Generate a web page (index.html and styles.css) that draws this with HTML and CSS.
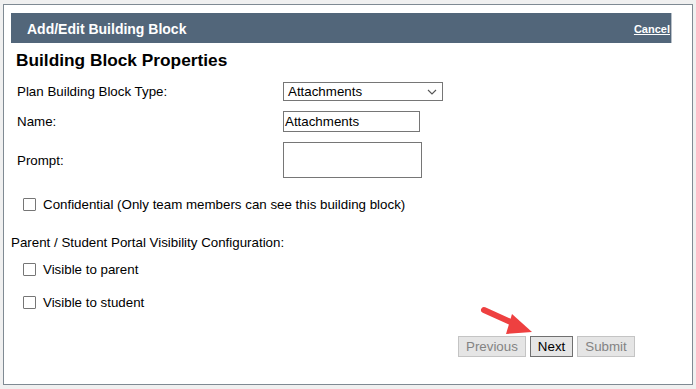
FILE: index.html
```html
<!DOCTYPE html>
<html>
<head>
<meta charset="utf-8">
<link rel="stylesheet" href="styles.css">
</head>
<body>
<div class="frame">
  <div class="header">
    <span class="title">Add/Edit Building Block</span>
    <a class="cancel" href="#">Cancel</a>
  </div>
  <div class="content">
    <h2 class="section">Building Block Properties</h2>
    <div class="form">
      <div class="row row-type">
        <label class="label">Plan Building Block Type:</label>
        <div class="select"><span>Attachments</span>
          <svg class="chev" width="10" height="6" viewBox="0 0 10 6"><path d="M1 1 L5 5 L9 1" fill="none" stroke="#555" stroke-width="1.1"/></svg>
        </div>
      </div>
      <div class="row row-name">
        <label class="label">Name:</label>
        <div class="input">Attachments</div>
      </div>
      <div class="row row-prompt">
        <label class="label">Prompt:</label>
        <div class="textarea"></div>
      </div>
    </div>
    <div class="check check-conf"><span class="box"></span><span>Confidential (Only team members can see this building block)</span></div>
    <div class="portal">Parent / Student Portal Visibility Configuration:</div>
    <div class="check check-parent"><span class="box"></span><span>Visible to parent</span></div>
    <div class="check check-student"><span class="box"></span><span>Visible to student</span></div>
    <div class="buttons">
      <button class="btn disabled">Previous</button>
      <button class="btn active">Next</button>
      <button class="btn disabled">Submit</button>
      <svg class="arrow" width="70" height="40" viewBox="0 0 70 40">
        <path d="M5 4 L38 19" stroke="#ee4040" stroke-width="6" stroke-linecap="round" fill="none"/>
        <polygon points="33,8 53,26 27,28" fill="#ee4040"/>
      </svg>
    </div>
  </div>
</div>
</body>
</html>
```

FILE: styles.css
```css
html, body {
  margin: 0;
  padding: 0;
}
body {
  background: #f0f0f0;
  font-family: Arial, "Liberation Sans", sans-serif;
  font-size: 13.33px;
  color: #000;
  padding: 4px 3px 0 3px;
}
.frame {
  width: 688px;
  height: 379px;
  border: 1px solid #7f8a93;
  background: #fff;
  box-sizing: content-box;
  position: relative;
}
.header {
  margin: 8px 0 0 7px;
  width: 661px;
  height: 30px;
  background: #52667a;
  border-right: 1px solid #b8c0c8;
  display: flex;
  align-items: center;
  justify-content: space-between;
  box-sizing: border-box;
  padding: 1px 1px 0 16px;
}
.title {
  color: #fff;
  font-weight: bold;
  font-size: 14px;
}
.cancel {
  color: #fff;
  font-weight: bold;
  font-size: 11px;
  text-decoration: underline;
}
.content {
  padding: 0 0 0 7px;
}
.section {
  margin: 7px 0 0 5px;
  font-size: 17.3px;
  font-weight: bold;
  line-height: 20px;
}
.form {
  margin-top: 12px;
  padding-left: 6px;
}
.row {
  display: grid;
  grid-template-columns: 266px auto;
  align-items: center;
}
.select {
  width: 160px;
  height: 19px;
  border: 1px solid #767676;
  box-sizing: border-box;
  display: flex;
  align-items: center;
  justify-content: space-between;
  padding: 0 5px 0 4px;
}
.row-name {
  margin-top: 10px;
}
.input {
  width: 137px;
  height: 21px;
  border: 1px solid #767676;
  box-sizing: border-box;
  padding: 0 1px;
  line-height: 19px;
}
.row-prompt {
  margin-top: 10px;
}
.textarea {
  width: 139px;
  height: 36px;
  border: 1px solid #767676;
  box-sizing: border-box;
}
.check {
  display: flex;
  align-items: center;
  gap: 7px;
  padding-left: 12px;
}
.box {
  width: 13px;
  height: 13px;
  border: 1px solid #767676;
  box-sizing: border-box;
  border-radius: 1px;
  display: inline-block;
}
.check-conf {
  margin-top: 19px;
}
.portal {
  margin-top: 23px;
}
.check-parent {
  margin-top: 12px;
}
.check-student {
  margin-top: 18px;
}
.buttons {
  position: relative;
  display: flex;
  gap: 4px;
  margin: 26px 0 0 447px;
}
.btn {
  font-family: Arial, "Liberation Sans", sans-serif;
  font-size: 13.33px;
  height: 21px;
  padding: 0 7px;
  background: #e5e5e5;
  border: 1px solid #adadad;
  margin: 0;
}
.btn.disabled {
  color: #838383;
  border-color: #c4c4c4;
}
.btn.active {
  color: #000;
  border-color: #707070;
}
.arrow {
  position: absolute;
  left: 21px;
  top: -30px;
}
```
